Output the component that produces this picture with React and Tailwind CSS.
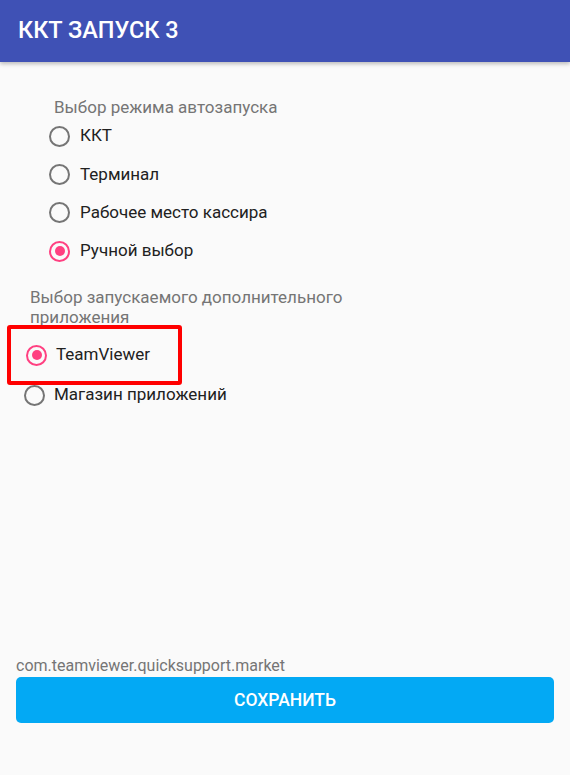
import React, { useState } from 'react';

const Radio = ({ checked }) => (
  <span
    className={`flex h-[21px] w-[21px] shrink-0 items-center justify-center rounded-full border-[2.5px] ${
      checked ? 'border-[#FF4081]' : 'border-[#757575]'
    }`}
  >
    {checked && <span className="h-[10px] w-[10px] rounded-full bg-[#FF4081]" />}
  </span>
);

const modes = ['ККТ', 'Терминал', 'Рабочее место кассира', 'Ручной выбор'];

export default function App() {
  const [mode, setMode] = useState(3);
  const [app, setApp] = useState(0);

  return (
    <div className="flex min-h-[775px] flex-col bg-[#FAFAFA] font-['Roboto',sans-serif]">
      {/* App bar */}
      <header className="flex h-[62px] items-center bg-[#3F51B5] pl-[18px] shadow-[0_2px_4px_rgba(0,0,0,0.25)]">
        <h1 className="text-[23.5px] font-medium text-white">ККТ ЗАПУСК 3</h1>
      </header>

      <main className="flex flex-1 flex-col pt-[35px]">
        {/* Autostart mode */}
        <div className="pl-[54px] text-[17px] leading-[20px] text-[#757575]">Выбор режима автозапуска</div>
        <div className="flex flex-col pl-[49px]">
          {modes.map((m, i) => (
            <button
              key={m}
              onClick={() => setMode(i)}
              className="flex h-[38.3px] items-center gap-[10px] text-left text-[17px] text-[#212121]"
            >
              <Radio checked={mode === i} />
              <span>{m}</span>
            </button>
          ))}
        </div>

        {/* Additional app */}
        <div className="mt-[17px] max-w-[360px] pl-[30px] text-[17px] leading-[20px] text-[#757575]">
          Выбор запускаемого дополнительного приложения
        </div>
        <div className="mt-[-2px] ml-[7px] w-[175px] rounded-[3px] border-4 border-[#FF0000]">
          <button
            onClick={() => setApp(0)}
            className="flex h-[52px] items-center gap-[9px] pl-[15px] text-[17px] text-[#212121]"
          >
            <Radio checked={app === 0} />
            <span>TeamViewer</span>
          </button>
        </div>
        <button
          onClick={() => setApp(1)}
          className="flex h-[20px] items-center gap-[9px] pl-[24px] text-left text-[17px] text-[#212121]"
        >
          <Radio checked={app === 1} />
          <span>Магазин приложений</span>
        </button>

        <div className="flex-1" />

        {/* Footer */}
        <div className="px-[16px] pb-[52px]">
          <div className="text-[16px] leading-[20px] text-[#757575]">com.teamviewer.quicksupport.market</div>
          <button className="mt-px flex h-[46px] w-full items-center justify-center rounded-[5px] bg-[#03A9F4] text-[17.5px] font-medium text-white">
            СОХРАНИТЬ
          </button>
        </div>
      </main>
    </div>
  );
}
